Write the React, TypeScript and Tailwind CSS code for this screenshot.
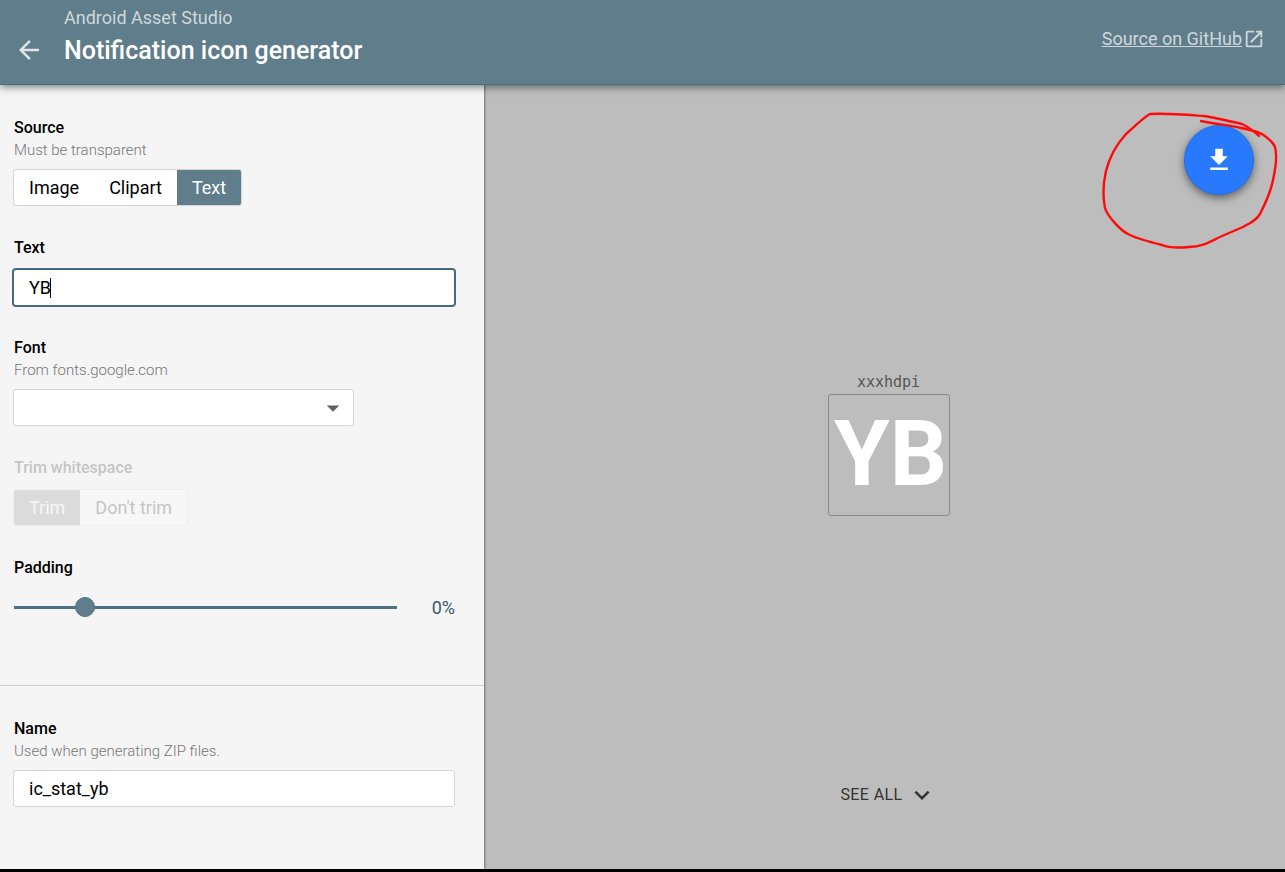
import React, { useState } from 'react'
import clsx from 'clsx'
import { MdArrowBack, MdArrowDropDown, MdExpandMore, MdFileDownload, MdOpenInNew } from 'react-icons/md'

interface FieldProps {
  label: string
  hint?: string
  htmlFor?: string
  disabled?: boolean
  children: React.ReactNode
}

const Field: React.FC<FieldProps> = ({ label, hint, htmlFor, disabled, children }) => (
  <div className={clsx('flex flex-col gap-[11px]', disabled && 'opacity-20')}>
    <div className="flex flex-col gap-1 pl-px">
      <label htmlFor={htmlFor} className="text-base leading-5 font-medium text-black">
        {label}
      </label>
      {hint && <p className="text-[15px] leading-4 font-light text-[#757575]">{hint}</p>}
    </div>
    {children}
  </div>
)

interface SegmentedProps {
  name: string
  options: string[]
  value: string
  disabled?: boolean
  onChange: (value: string) => void
}

const Segmented: React.FC<SegmentedProps> = ({ name, options, value, disabled, onChange }) => (
  <div
    role="radiogroup"
    aria-label={name}
    className="flex h-[37px] self-start overflow-hidden rounded-[3px] border border-[#d4d4d4] bg-white"
  >
    {options.map((option) => (
      <label
        key={option}
        className={clsx(
          'flex items-center px-[15px] text-lg',
          option !== value && 'text-black',
          option === value && 'text-white',
          option === value && (disabled ? 'bg-[#757575]' : 'bg-[#607d8b]')
        )}
      >
        <input
          type="radio"
          className="sr-only"
          name={name}
          value={option}
          checked={option === value}
          disabled={disabled}
          onChange={() => onChange(option)}
        />
        {option}
      </label>
    ))}
  </div>
)

const Header: React.FC = () => (
  <header className="relative z-10 flex h-[85px] items-start justify-between border-b border-[#3f6f88] bg-[#607d8b] pr-5 shadow-[0_2px_8px_rgba(0,0,0,0.5)]">
    <div className="flex">
      <a href="#home" aria-label="Back" className="mt-[35px] ml-3.5 text-[#dfe5e8]">
        <MdArrowBack size={30} />
      </a>
      <div className="ml-5 flex flex-col pt-1">
        <a href="#studio" className="text-lg leading-7 text-[#cfd8dc]">
          Android Asset Studio
        </a>
        <h1 className="text-[25px] leading-[38px] font-medium text-white">Notification icon generator</h1>
      </div>
    </div>
    <a href="#source" className="mt-[25px] flex items-center gap-px text-lg leading-7 text-[#cfd8dc]">
      <span className="underline">Source on GitHub</span>
      <MdOpenInNew size={22} />
    </a>
  </header>
)

const Sidebar: React.FC = () => {
  const [source, setSource] = useState('Text')
  const [text, setText] = useState('YB')
  const [trim, setTrim] = useState('Trim')
  const [padding, setPadding] = useState(0)
  const [name, setName] = useState('ic_stat_yb')

  return (
    <aside className="z-[1] w-[484px] shrink-0 bg-[#f5f5f5] shadow-[1px_0_2px_rgba(0,0,0,0.4)]">
      <div className="flex flex-col gap-8 border-b border-[#cfcfcf] pt-[33px] pr-[29px] pb-[59px] pl-[13px]">
        <Field label="Source" hint="Must be transparent">
          <Segmented name="Source" options={['Image', 'Clipart', 'Text']} value={source} onChange={setSource} />
        </Field>

        <Field label="Text" htmlFor="text">
          <div className="relative flex items-center">
            <input
              id="text"
              type="text"
              value={text}
              onChange={(e) => setText(e.target.value)}
              className="peer h-[37px] w-full rounded-[3px] border border-[#456a7b] bg-white px-[15px] text-lg text-black ring-1 ring-[#456a7b] outline-none"
            />
            {/* Resting caret, replaced by the native one on focus */}
            <span aria-hidden="true" className="absolute left-[37px] h-5 w-px bg-black peer-focus:hidden" />
          </div>
        </Field>

        <Field label="Font" hint="From fonts.google.com" htmlFor="font">
          <div className="relative flex w-[341px]">
            <select
              id="font"
              className="h-[37px] w-full appearance-none rounded-[3px] border border-[#d4d4d4] bg-white px-[15px] text-lg"
            >
              <option value="" />
            </select>
            <MdArrowDropDown size={30} className="pointer-events-none absolute top-1 right-1.5 text-[#616161]" />
          </div>
        </Field>

        <Field label="Trim whitespace" disabled>
          <Segmented name="Trim whitespace" options={['Trim', "Don't trim"]} value={trim} onChange={setTrim} disabled />
        </Field>

        <Field label="Padding" htmlFor="padding">
          <div className="flex h-[37px] items-center pl-px">
            <input
              id="padding"
              type="range"
              min={-10}
              max={50}
              value={padding}
              onChange={(e) => setPadding(Number(e.target.value))}
              className="h-5 w-[383px] appearance-none bg-transparent [&::-webkit-slider-runnable-track]:h-[3px] [&::-webkit-slider-runnable-track]:bg-[#4d7183] [&::-webkit-slider-thumb]:-mt-[9px] [&::-webkit-slider-thumb]:size-5 [&::-webkit-slider-thumb]:appearance-none [&::-webkit-slider-thumb]:rounded-full [&::-webkit-slider-thumb]:border [&::-webkit-slider-thumb]:border-[#4d7183] [&::-webkit-slider-thumb]:bg-[#607d8b]"
            />
            <output htmlFor="padding" className="flex-1 text-right text-lg text-[#37596a]">
              {padding}%
            </output>
          </div>
        </Field>
      </div>

      <div className="pt-[33px] pr-[29px] pb-8 pl-[13px]">
        <Field label="Name" hint="Used when generating ZIP files." htmlFor="name">
          <input
            id="name"
            type="text"
            value={name}
            onChange={(e) => setName(e.target.value)}
            className="h-[37px] w-full rounded-[3px] border border-[#d4d4d4] bg-white px-[15px] text-lg text-black outline-none"
          />
        </Field>
      </div>
    </aside>
  )
}

const Preview: React.FC = () => (
  <main className="relative flex flex-1 flex-col items-center bg-[#bdbdbd] pb-[52px] pl-2">
    <figure className="flex flex-1 flex-col items-center justify-center pt-7">
      <figcaption className="font-['DejaVu_Sans_Mono',monospace] text-[15px] leading-6 text-[#555]">xxxhdpi</figcaption>
      <div className="flex size-[122px] items-center justify-center rounded-[3px] border border-[#8a8a8a] pl-1 text-[90px] leading-none font-bold text-white">
        YB
      </div>
    </figure>

    <button type="button" className="flex h-[45px] items-center gap-1 text-base tracking-wide text-[#333]">
      SEE ALL
      <MdExpandMore size={30} />
    </button>

    {/* Floating download button */}
    <button
      type="button"
      aria-label="Download ZIP"
      className="absolute top-10 right-[31px] flex size-[70px] items-center justify-center rounded-full border border-[#1a70f0] bg-[#2979ff] text-white shadow-[0_3px_8px_rgba(0,0,0,0.5)]"
    >
      <MdFileDownload size={30} />
    </button>

    {/* Hand-drawn circle */}
    <svg
      className="pointer-events-none absolute top-5 right-0"
      width="200"
      height="160"
      viewBox="1085 105 200 160"
      fill="none"
      stroke="#ff0a0a"
      strokeWidth="2.4"
      strokeLinecap="round"
      strokeLinejoin="round"
    >
      <path d="M1201 121 C1214 124 1230 125 1241 128 C1251 130 1256 131 1262 134 C1268 138 1273 142 1275 147 C1278 158 1275 171 1273 180 C1271 192 1264 206 1260 214 C1255 222 1251 222 1243 227 L1222 236 C1211 241 1203 247 1189 247 C1178 248 1169 248 1162 245 C1150 242 1138 239 1130 235 C1120 231 1107 215 1105 208 C1103 198 1103 184 1106 171 C1109 159 1116 145 1126 134 C1134 127 1144 117 1150 114 C1168 113 1190 115 1204 116 C1216 118 1229 121 1242 124 C1250 128 1255 132 1259 136" />
    </svg>
  </main>
)

export default function App() {
  return (
    <div className="flex min-h-screen flex-col border-b-3 border-black font-['Roboto',sans-serif]">
      <Header />
      <div className="flex flex-1">
        <Sidebar />
        <Preview />
      </div>
    </div>
  )
}
